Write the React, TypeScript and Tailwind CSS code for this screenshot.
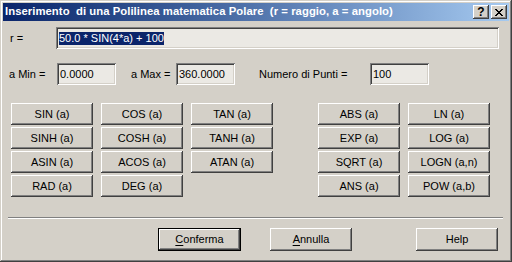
const raised =
  'shadow-[inset_-1px_-1px_#404040,inset_1px_1px_#ffffff,inset_-2px_-2px_#808080,inset_2px_2px_#d4d0c8]';
const sunken =
  'shadow-[inset_1px_1px_#808080,inset_-1px_-1px_#ffffff,inset_2px_2px_#404040,inset_-2px_-2px_#d4d0c8]';

const leftFns = [
  ['SIN (a)', 'COS (a)', 'TAN (a)'],
  ['SINH (a)', 'COSH (a)', 'TANH (a)'],
  ['ASIN (a)', 'ACOS (a)', 'ATAN (a)'],
  ['RAD (a)', 'DEG (a)', ''],
];

const rightFns = [
  ['ABS (a)', 'LN (a)'],
  ['EXP (a)', 'LOG (a)'],
  ['SQRT (a)', 'LOGN (a,n)'],
  ['ANS (a)', 'POW (a,b)'],
];

function FnButton({ label }: { label: string }) {
  if (!label) return <div className="w-[82px] h-[22px]" />;
  return (
    <button
      className={`w-[82px] h-[22px] bg-[#d4d0c8] flex items-center justify-center text-black ${raised}`}
    >
      {label}
    </button>
  );
}

function Field({ value, width }: { value: string; width: string }) {
  return (
    <div className={`${width} h-[22px] bg-[#ebe9e4] flex items-center pl-[3px] ${sunken}`}>
      {value}
    </div>
  );
}

export default function App() {
  return (
    <div className="w-[512px] h-[262px] overflow-hidden font-['Liberation_Sans',Arial,sans-serif] text-[11px] text-black">
      <div className="w-[512px] h-[262px] bg-[#d4d0c8] p-[3px] shadow-[inset_-1px_-1px_#404040,inset_1px_1px_#d4d0c8,inset_-2px_-2px_#808080,inset_2px_2px_#ffffff] flex flex-col">
        {/* title bar */}
        <div className="h-[18px] bg-gradient-to-r from-[#0a246a] to-[#a6caf0] flex items-center pl-[2px] pr-[2px]">
          <span className="flex-1 text-white font-bold text-[11.3px] tracking-[0.05px] whitespace-pre leading-none">
            Inserimento  di una Polilinea matematica Polare  (r = raggio, a = angolo)
          </span>
          <div className={`w-[16px] h-[14px] bg-[#d4d0c8] mr-[2px] flex items-center justify-center font-bold text-[12px] leading-none ${raised}`}>
            ?
          </div>
          <div className={`w-[16px] h-[14px] bg-[#d4d0c8] flex items-center justify-center ${raised}`}>
            <svg width="8" height="7" viewBox="0 0 8 7" shapeRendering="crispEdges">
              <path d="M0 0h2v1h-2zM6 0h2v1h-2zM1 1h2v1h-2zM5 1h2v1h-2zM2 2h4v1h-4zM3 3h2v1h-2zM2 4h4v1h-4zM1 5h2v1h-2zM5 5h2v1h-2zM0 6h2v1h-2zM6 6h2v1h-2z" fill="#000" />
            </svg>
          </div>
        </div>

        {/* r = */}
        <div className="flex items-center mt-[6px]">
          <div className="w-[53px] pl-[7px]">r =</div>
          <div className={`w-[443px] h-[22px] bg-[#ebe9e4] flex items-center pl-[3px] ${sunken}`}>
            <span className="bg-[#0a246a] text-white leading-[13px]">50.0 * SIN(4*a) + 100</span>
          </div>
        </div>

        {/* range */}
        <div className="flex items-center mt-[14px]">
          <div className="w-[54px] pl-[6px]">a Min =</div>
          <Field value="0.0000" width="w-[59px]" />
          <div className="w-[60px] pl-[15px]">a Max =</div>
          <Field value="360.0000" width="w-[59px]" />
          <div className="w-[135px] pl-[24px]">Numero di Punti =</div>
          <Field value="100" width="w-[59px]" />
        </div>

        {/* functions */}
        <div className="flex mt-[18px] pl-[8px]">
          <div className="grid grid-cols-3 gap-x-[8px] gap-y-[2px]">
            {leftFns.flat().map((f, i) => (
              <FnButton key={i} label={f} />
            ))}
          </div>
          <div className="grid grid-cols-2 gap-x-[8px] gap-y-[2px] ml-[45px]">
            {rightFns.flat().map((f, i) => (
              <FnButton key={i} label={f} />
            ))}
          </div>
        </div>

        {/* separator */}
        <div className="ml-[5px] w-[495px] mt-[20px] h-[2px] border-t border-[#808080] border-b border-b-white" />

        {/* bottom buttons */}
        <div className="flex mt-[9px]">
          <div className="ml-[155px] w-[83px] h-[23px] border border-black">
            <button className={`w-full h-full bg-[#d4d0c8] flex items-center justify-center ${raised}`}>
              <span>
                <span className="underline underline-offset-[2px]">C</span>onferma
              </span>
            </button>
          </div>
          <button className={`ml-[29px] w-[82px] h-[23px] bg-[#d4d0c8] flex items-center justify-center ${raised}`}>
            <span>
              <span className="underline underline-offset-[2px]">A</span>nnulla
            </span>
          </button>
          <button className={`ml-[64px] w-[82px] h-[23px] bg-[#d4d0c8] flex items-center justify-center ${raised}`}>
            Help
          </button>
        </div>
      </div>
    </div>
  );
}
